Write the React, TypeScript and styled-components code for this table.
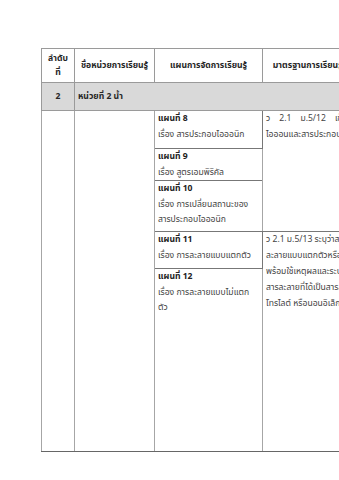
import styled, { createGlobalStyle } from 'styled-components';

const Global = createGlobalStyle`
  html, body { margin: 0; padding: 0; background: #fff; }
  body { font-family: 'Noto Sans Thai', 'Noto Sans', 'DejaVu Sans', sans-serif; overflow: hidden; }
`;

const Page = styled.div`
  width: 339px;
  height: 480px;
  overflow: hidden;
  padding: 48px 0 0 41px;
  box-sizing: border-box;
`;

const Table = styled.table`
  border-collapse: collapse;
  table-layout: fixed;
  width: 340px;
  font-size: 8.6px;
  color: #444;
`;

const Th = styled.th`
  border: 1px solid #9a9a9a;
  font-weight: 700;
  color: #262626;
  text-align: center;
  vertical-align: middle;
  line-height: 14px;
  padding: 0 3px;
  white-space: nowrap;
  overflow: hidden;
`;

const UnitRow = styled.tr`
  background: #d9d9d9;
  height: 28px;
`;

const UnitCell = styled.td<{ $center?: boolean }>`
  border: 1px solid #9a9a9a;
  font-weight: 700;
  color: #262626;
  text-align: ${(p) => (p.$center ? 'center' : 'left')};
  padding: 0 3px;
  vertical-align: middle;
`;

const Blank = styled.td`
  border: 1px solid #a6a6a6;
  border-bottom: 1px solid #666;
  vertical-align: top;
`;

const PlanCell = styled.td<{ $h: number; $last?: boolean }>`
  height: ${(p) => p.$h}px;
  border: 1px solid #777;
  border-left: 1px solid #444;
  border-bottom: 1px solid ${(p) => (p.$last ? '#666' : '#777')};
  vertical-align: top;
  padding: 0 4px 0 3px;
  line-height: 15.5px;
  box-sizing: border-box;
`;

const StdCell = styled.td<{ $last?: boolean }>`
  border: 1px solid #a6a6a6;
  border-bottom: 1px solid ${(p) => (p.$last ? '#666' : '#777')};
  vertical-align: top;
  padding: 0 4px 0 3px;
  line-height: 16px;
  white-space: nowrap;
  overflow: hidden;
`;

const PlanTitle = styled.div`
  font-weight: 700;
  color: #222;
`;

const Spread = styled.div`
  display: flex;
  gap: 9px;
`;

type Plan = { no: number; topic: string; h: number };

const plans: Plan[] = [
  { no: 8, topic: 'เรื่อง สารประกอบไอออนิก', h: 38 },
  { no: 9, topic: 'เรื่อง สูตรเอมพิริคัล', h: 30 },
  { no: 10, topic: 'เรื่อง การเปลี่ยนสถานะของ สารประกอบไอออนิก', h: 51 },
  { no: 11, topic: 'เรื่อง การละลายแบบแตกตัว', h: 37 },
  { no: 12, topic: 'เรื่อง การละลายแบบไม่แตก ตัว', h: 183 },
];

const PlanBody = ({ p, last }: { p: Plan; last?: boolean }) => (
  <PlanCell $h={p.h} $last={last}>
    <PlanTitle>แผนที่ {p.no}</PlanTitle>
    <div>{p.topic}</div>
  </PlanCell>
);

export default function App() {
  return (
    <Page>
      <Global />
      <Table>
        <colgroup>
          <col style={{ width: 33 }} />
          <col style={{ width: 80 }} />
          <col style={{ width: 108 }} />
          <col style={{ width: 119 }} />
        </colgroup>
        <thead>
          <tr style={{ height: 34 }}>
            <Th>
              ลำดับ
              <br />
              ที่
            </Th>
            <Th>ชื่อหน่วยการเรียนรู้</Th>
            <Th>แผนการจัดการเรียนรู้</Th>
            <Th>มาตรฐานการเรียนรู้/ตัวชี้วัด</Th>
          </tr>
        </thead>
        <tbody>
          <UnitRow>
            <UnitCell $center>2</UnitCell>
            <UnitCell colSpan={3}>หน่วยที่ 2 น้ำ</UnitCell>
          </UnitRow>
          <tr>
            <Blank rowSpan={5} />
            <Blank rowSpan={5} />
            <PlanBody p={plans[0]} />
            <StdCell rowSpan={3}>
              <Spread>
                <span>ว</span>
                <span>2.1</span>
                <span>ม.5/12</span>
                <span>เข้าใจสมบัติของสาร</span>
              </Spread>
              <div>ไอออนและสารประกอบไอออนิก</div>
            </StdCell>
          </tr>
          <tr>
            <PlanBody p={plans[1]} />
          </tr>
          <tr>
            <PlanBody p={plans[2]} />
          </tr>
          <tr>
            <PlanBody p={plans[3]} />
            <StdCell rowSpan={2} $last>
              <div>ว 2.1 ม.5/13 ระบุว่าสารเกิดการ</div>
              <div>ละลายแบบแตกตัวหรือไม่แตกตัว</div>
              <div>พร้อมใช้เหตุผลและระบุว่า</div>
              <div>สารละลายที่ได้เป็นสารละลายอิเล็ก</div>
              <div>โทรไลต์ หรือนอนอิเล็กโทรไลต์</div>
            </StdCell>
          </tr>
          <tr>
            <PlanBody p={plans[4]} last />
          </tr>
        </tbody>
      </Table>
    </Page>
  );
}
